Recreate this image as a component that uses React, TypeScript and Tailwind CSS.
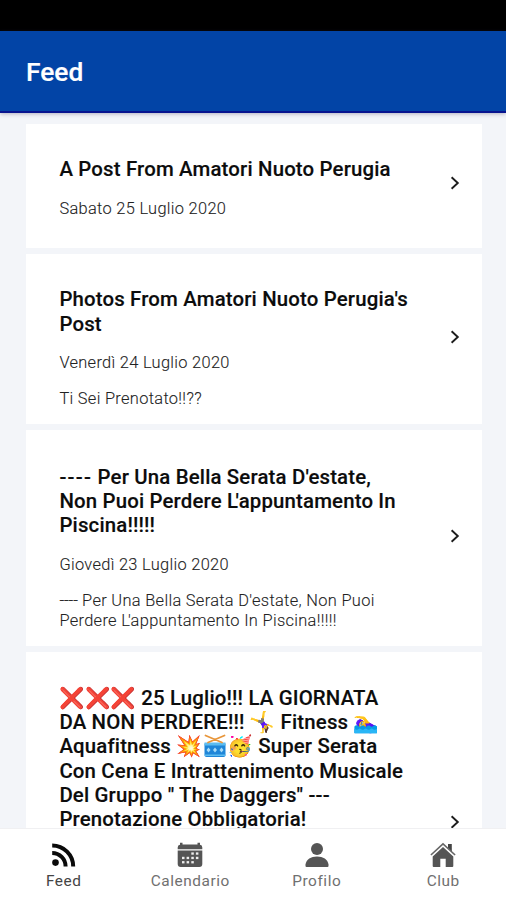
import { Fragment } from "react";
import type { ReactNode } from "react";

type Post = {
  title: string[];
  date?: string;
  body?: string[];
  card: string;
  arrow: string;
};

const posts: Post[] = [
  {
    title: ["A Post From Amatori Nuoto Perugia"],
    date: "Sabato 25 Luglio 2020",
    card: "h-[124px] pt-[33.4px]",
    arrow: "top-[51px]",
  },
  {
    title: ["Photos From Amatori Nuoto Perugia's", "Post"],
    date: "Venerdì 24 Luglio 2020",
    body: ["Ti Sei Prenotato!!??"],
    card: "h-[170px] pt-[33.4px]",
    arrow: "top-[75px]",
  },
  {
    title: ["---- Per Una Bella Serata D'estate,", "Non Puoi Perdere L'appuntamento In", "Piscina!!!!!"],
    date: "Giovedì 23 Luglio 2020",
    body: ["---- Per Una Bella Serata D'estate, Non Puoi", "Perdere L'appuntamento In Piscina!!!!!"],
    card: "h-[215.5px] pt-[34.6px]",
    arrow: "top-[98px]",
  },
  {
    title: [
      "❌❌❌ 25 Luglio!!! LA GIORNATA",
      "DA NON PERDERE!!! 🤸‍♀️ Fitness 🏊‍♀️",
      "Aquafitness 💥🥁🥳 Super Serata",
      "Con Cena E Intrattenimento Musicale",
      "Del Gruppo \" The Daggers\" ---",
      "Prenotazione Obbligatoria!",
    ],
    card: "h-[340px] pt-[34px]",
    arrow: "top-[162.500px]",
  },
];

function Drum() {
  return (
    <svg viewBox="0 0 24 24" role="img" aria-label="🥁" className="mx-[0.800px] inline-block size-[24px] align-[-5px]">
      <path d="M1.500 9.500h21V21q0 2-2 2h-17q-2 0-2-2z" fill="#1f86d8" />
      <path d="M1.500 8.500h21v3h-21zM1.500 20.500h21v1.500h-21z" fill="#5cbcf0" />
      <path d="M5.500 13.500l2 2.500-2 2.500-2-2.500zM12 13.500l2 2.500-2 2.500-2-2.500zM18.500 13.500l2 2.500-2 2.500-2-2.500z" fill="#a9dcf7" />
      <path d="M2.500 1.500 19 8.500M21.500 1.500 5 8.500" fill="none" stroke="#e8963a" strokeWidth="1.800" strokeLinecap="round" />
    </svg>
  );
}

/* Sets a line of text; tightens L', spaces leading dashes and swaps in the drawn drum. */
function Line({ text, dashes }: { text: string; dashes: string }) {
  return (
    <>
      {text.split(/(L(?=')|^----|🥁)/u).map((part, i) => {
        if (part === "L") return <span key={i} className="tracking-[-0.12em]">L</span>;
        if (part === "----") return <span key={i} className={dashes}>----</span>;
        if (part === "🥁") return <Drum key={i} />;
        return <Fragment key={i}>{part}</Fragment>;
      })}
    </>
  );
}

function Chevron({ className }: { className: string }) {
  return (
    <svg viewBox="0 0 10 16" className={`absolute right-[22px] h-4 w-[10px] ${className}`} fill="none" stroke="#1c1c1c" strokeWidth="1.900">
      <path d="M1.600 2.200 L7.800 8 L1.600 13.800" />
    </svg>
  );
}

function PostCard({ post }: { post: Post }) {
  return (
    <article className={`relative shrink-0 bg-white pl-[33.4px] ${post.card}`}>
      <h2 className="text-[20.4px] font-medium leading-[24.4px] tracking-[0.16px] text-[#0c0c0c] [-webkit-text-stroke:0.15px_#0c0c0c]">
        {post.title.map((line) => (
          <span key={line} className="block h-[24.4px] whitespace-nowrap">
            <Line text={line} dashes="tracking-[1.3px]" />
          </span>
        ))}
      </h2>
      {post.date && (
        <p className="mt-[17px] h-5 whitespace-nowrap text-[16.4px] font-light leading-5 tracking-[0.32px] text-[#222] [-webkit-text-stroke:0.1px_#222]">{post.date}</p>
      )}
      {post.body && (
        <div className="mt-[16.3px] text-[16.4px] font-light leading-5 tracking-[0.32px] text-[#222] [-webkit-text-stroke:0.1px_#222]">
          {post.body.map((line) => (
            <p key={line} className="whitespace-nowrap">
              <Line text={line} dashes="tracking-[-0.1px]" />
            </p>
          ))}
        </div>
      )}
      <Chevron className={post.arrow} />
    </article>
  );
}

function FeedIcon() {
  return (
    <svg viewBox="0 0 26 26" className="size-[26px]" fill="none" stroke="#0a0a0a" strokeWidth="4">
      <circle cx="4.500" cy="20.600" r="3.300" fill="#0a0a0a" stroke="none" />
      <path d="M1.200 3.400 A21 21 0 0 1 22.200 24.400" />
      <path d="M1.200 11 A13.400 13.400 0 0 1 14.600 24.400" />
    </svg>
  );
}

function CalendarIcon() {
  return (
    <svg viewBox="0 0 26 26" className="size-[26px]" fill="#555">
      <path d="M3 .8h2.500v1.800h15V.8H23v1.900q2.300.4 2.300 2.700v1.800H.7V5.400Q.7 3.100 3 2.700z" />
      <path d="M.7 8.400h24.600V22q0 3-3 3H3.700q-3 0-3-3z" />
      <g fill="#eee">
        <rect x="14.300" y="10.400" width="2.500" height="2.300" />
        <rect x="18.900" y="10.400" width="2.500" height="2.300" />
        <rect x="5" y="14.800" width="2.500" height="2.300" />
        <rect x="9.600" y="14.800" width="2.500" height="2.300" />
        <rect x="14.300" y="14.800" width="2.500" height="2.300" />
        <rect x="18.900" y="14.800" width="2.500" height="2.300" />
        <rect x="5" y="19.100" width="2.500" height="2.300" />
        <rect x="9.600" y="19.100" width="2.500" height="2.300" />
        <rect x="14.300" y="19.100" width="2.500" height="2.300" />
      </g>
    </svg>
  );
}

function PersonIcon() {
  return (
    <svg viewBox="0 0 26 26" className="size-[26px]" fill="#555">
      <circle cx="13" cy="6.900" r="6" />
      <path d="M1.500 24v-1.500C2.200 17.600 7 14.600 13 14.600s10.800 3 11.500 7.900V24q0 1-1 1h-21q-1 0-1-1z" />
    </svg>
  );
}

function HomeIcon() {
  return (
    <svg viewBox="0 0 26 26" className="size-[26px]">
      <path d="M18 2h3.800v8L18 6z" fill="#444" />
      <path d="M.900 13 13 1.800l12.100 11.200" fill="none" stroke="#666" strokeWidth="1.600" />
      <path d="M13 5 23.300 14.400V24q0 1-1 1h-6.600v-8.300h-5.400V25H3.700q-1 0-1-1v-9.600z" fill="#555" />
    </svg>
  );
}

function Tab({ icon, label, color }: { icon: ReactNode; label: string; color: string }) {
  return (
    <div className={`flex flex-1 flex-col items-center pl-px pt-[13px] ${color}`}>
      {icon}
      <span className="mt-[3px] text-[15.4px] leading-5 tracking-[0.55px]">{label}</span>
    </div>
  );
}

export default function App() {
  return (
    <div className="flex h-[900px] w-[506px] flex-col overflow-hidden bg-[#f3f5f9] font-['Roboto','Noto_Color_Emoji',sans-serif]">
      <div className="h-[31px] shrink-0 bg-black" />
      <header className="z-10 flex h-[82px] shrink-0 items-center border-b-2 border-[#08148f] bg-[#0244a6] pl-[26px] pt-[2px] shadow-[0_1px_4px_rgba(60,50,90,0.35)]">
        <h1 className="text-[26.3px] font-medium leading-8 text-white [-webkit-text-stroke:0.2px_white]">Feed</h1>
      </header>
      <main className="flex min-h-0 flex-1 flex-col gap-[6px] overflow-hidden pl-[26px] pr-[24px] pt-[11px]">
        {posts.map((p) => (
          <PostCard key={p.title[0]} post={p} />
        ))}
      </main>
      <nav className="flex h-[72px] shrink-0 border-t border-[#f0f0f2] bg-white">
        <Tab icon={<FeedIcon />} label="Feed" color="text-[#444]" />
        <Tab icon={<CalendarIcon />} label="Calendario" color="text-[#707070]" />
        <Tab icon={<PersonIcon />} label="Profilo" color="text-[#707070]" />
        <Tab icon={<HomeIcon />} label="Club" color="text-[#707070]" />
      </nav>
    </div>
  );
}
